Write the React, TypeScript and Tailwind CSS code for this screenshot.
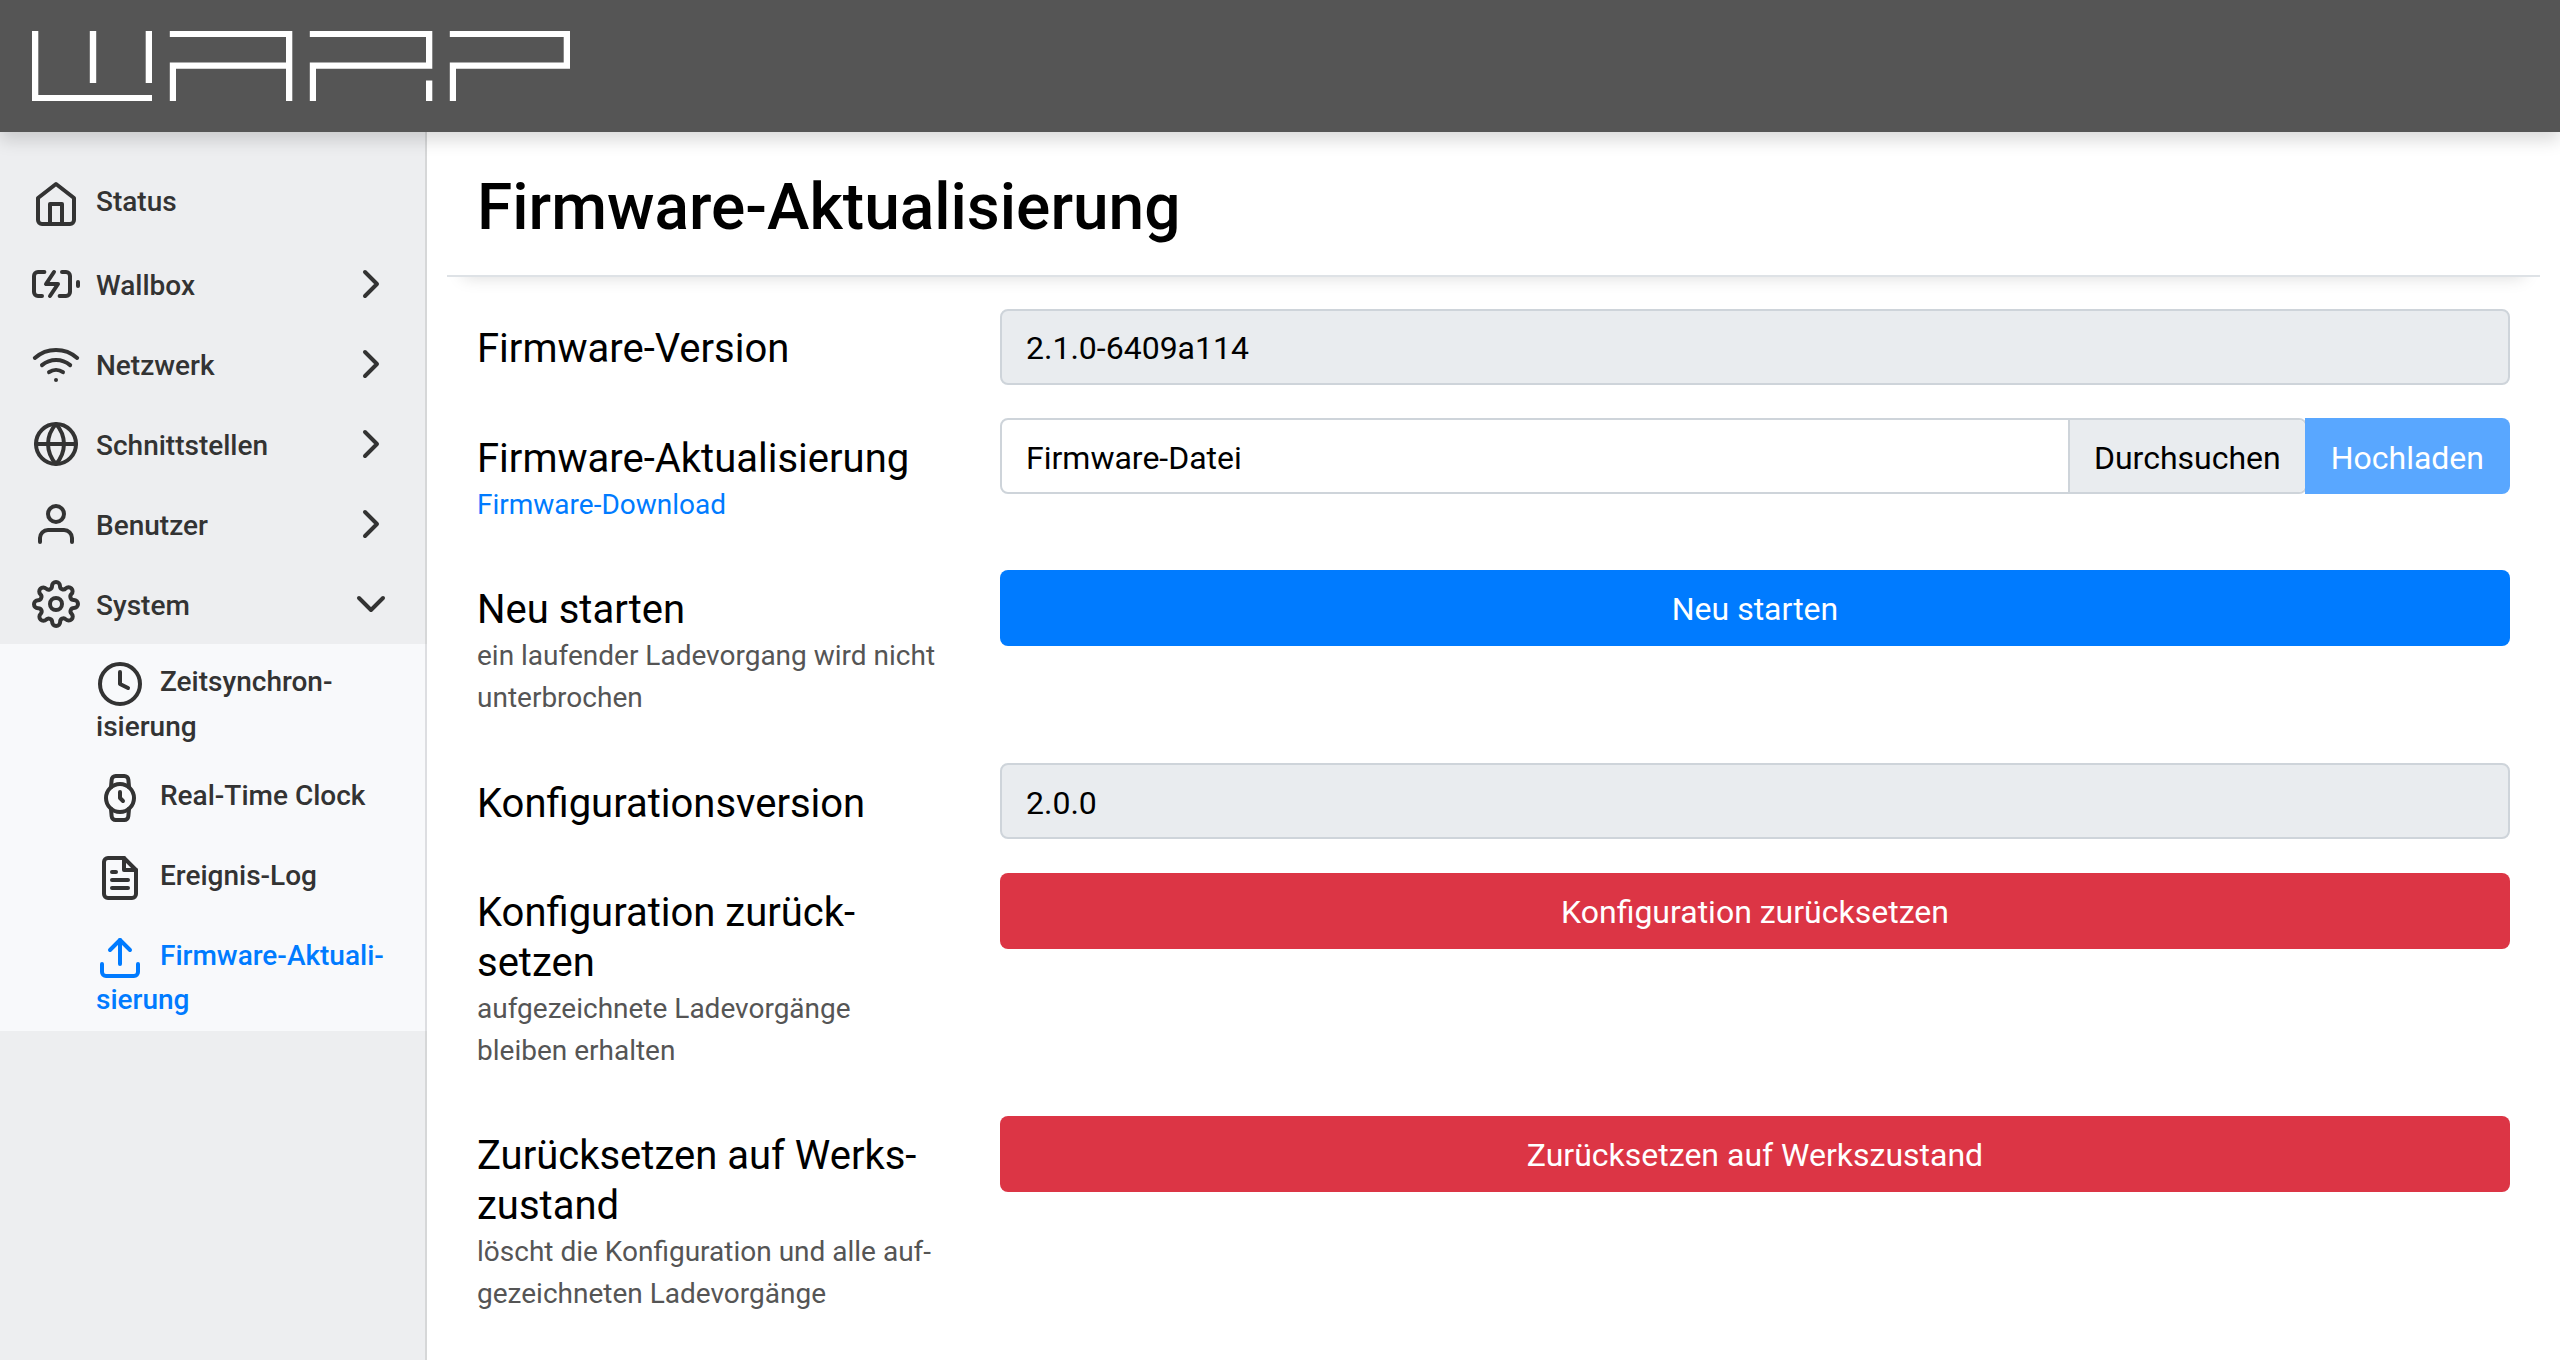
import React from "react";

const Icon = ({ children, className = "" }: { children: React.ReactNode; className?: string }) => (
  <svg
    viewBox="0 0 24 24"
    fill="none"
    stroke="currentColor"
    strokeWidth="2"
    strokeLinecap="round"
    strokeLinejoin="round"
    className={"size-12 shrink-0 " + className}
  >
    {children}
  </svg>
);

const Home = () => (
  <Icon>
    <path d="M3 9l9-7 9 7v11a2 2 0 0 1-2 2H5a2 2 0 0 1-2-2z" />
    <polyline points="9 22 9 12 15 12 15 22" />
  </Icon>
);
const Battery = () => (
  <Icon>
    <path d="M5 18H3a2 2 0 0 1-2-2V8a2 2 0 0 1 2-2h3.19M15 6h2a2 2 0 0 1 2 2v8a2 2 0 0 1-2 2h-3.19" />
    <line x1="23" y1="13" x2="23" y2="11" />
    <polyline points="11 6 7 12 13 12 9 18" />
  </Icon>
);
const Wifi = () => (
  <Icon>
    <path d="M5 12.55a11 11 0 0 1 14.08 0" />
    <path d="M1.42 9a16 16 0 0 1 21.16 0" />
    <path d="M8.53 16.11a6 6 0 0 1 6.95 0" />
    <line x1="12" y1="20" x2="12.01" y2="20" />
  </Icon>
);
const Globe = () => (
  <Icon>
    <circle cx="12" cy="12" r="10" />
    <line x1="2" y1="12" x2="22" y2="12" />
    <path d="M12 2a15.3 15.3 0 0 1 4 10 15.3 15.3 0 0 1-4 10 15.3 15.3 0 0 1-4-10 15.3 15.3 0 0 1 4-10z" />
  </Icon>
);
const User = () => (
  <Icon>
    <path d="M20 21v-2a4 4 0 0 0-4-4H8a4 4 0 0 0-4 4v2" />
    <circle cx="12" cy="7" r="4" />
  </Icon>
);
const Settings = () => (
  <Icon>
    <circle cx="12" cy="12" r="3" />
    <path d="M19.4 15a1.65 1.65 0 0 0 .33 1.82l.06.06a2 2 0 0 1 0 2.83 2 2 0 0 1-2.83 0l-.06-.06a1.65 1.65 0 0 0-1.82-.33 1.65 1.65 0 0 0-1 1.51V21a2 2 0 0 1-2 2 2 2 0 0 1-2-2v-.09A1.65 1.65 0 0 0 9 19.4a1.65 1.65 0 0 0-1.82.33l-.06.06a2 2 0 0 1-2.83 0 2 2 0 0 1 0-2.83l.06-.06a1.65 1.65 0 0 0 .33-1.82 1.65 1.65 0 0 0-1.51-1H3a2 2 0 0 1-2-2 2 2 0 0 1 2-2h.09A1.65 1.65 0 0 0 4.6 9a1.65 1.65 0 0 0-.33-1.82l-.06-.06a2 2 0 0 1 0-2.83 2 2 0 0 1 2.83 0l.06.06a1.65 1.65 0 0 0 1.82.33H9a1.65 1.65 0 0 0 1-1.51V3a2 2 0 0 1 2-2 2 2 0 0 1 2 2v.09a1.65 1.65 0 0 0 1 1.51 1.65 1.65 0 0 0 1.82-.33l.06-.06a2 2 0 0 1 2.83 0 2 2 0 0 1 0 2.83l-.06.06a1.65 1.65 0 0 0-.33 1.82V9a1.65 1.65 0 0 0 1.51 1H21a2 2 0 0 1 2 2 2 2 0 0 1-2 2h-.09a1.65 1.65 0 0 0-1.51 1z" />
  </Icon>
);
const Clock = () => (
  <Icon>
    <circle cx="12" cy="12" r="10" />
    <polyline points="12 6 12 12 16 14" />
  </Icon>
);
const Watch = () => (
  <Icon>
    <circle cx="12" cy="12" r="7" />
    <polyline points="12 9 12 12 13.5 13.5" />
    <path d="M16.51 17.35l-.35 3.83a2 2 0 0 1-2 1.82H9.83a2 2 0 0 1-2-1.82l-.35-3.83m.01-10.7l.35-3.83A2 2 0 0 1 9.83 1h4.35a2 2 0 0 1 2 1.82l.35 3.83" />
  </Icon>
);
const FileText = () => (
  <Icon>
    <path d="M14 2H6a2 2 0 0 0-2 2v16a2 2 0 0 0 2 2h12a2 2 0 0 0 2-2V8z" />
    <polyline points="14 2 14 8 20 8" />
    <line x1="16" y1="13" x2="8" y2="13" />
    <line x1="16" y1="17" x2="8" y2="17" />
    <polyline points="10 9 9 9 8 9" />
  </Icon>
);
const Upload = () => (
  <Icon>
    <path d="M21 15v4a2 2 0 0 1-2 2H5a2 2 0 0 1-2-2v-4" />
    <polyline points="17 8 12 3 7 8" />
    <line x1="12" y1="3" x2="12" y2="15" />
  </Icon>
);

const Logo = () => (
  <svg viewBox="0 0 538 70" className="h-[70px] w-[538px]" fill="#fff">
    <path d="M0 0h6.3v64H120v6H0z" />
    <path d="M57.8 0h6.4v52h-6.4zM113.7 0h6.3v52h-6.3z" />
    <path d="M137.8 0h122.5v70H254V37.8H144V70h-6.2V31.5H254V6H137.8z" />
    <path d="M277.8 0h122.5v37.8H284V70h-6.2V31.5H394V6H277.8zM394 49.5h6.3V70H394z" />
    <path d="M417.8 0H538v37.8H424V70h-6.2V31.5H531.7V6H417.8z" />
  </svg>
);

const groups = [
  { label: "Wallbox", icon: <Battery /> },
  { label: "Netzwerk", icon: <Wifi /> },
  { label: "Schnittstellen", icon: <Globe /> },
  { label: "Benutzer", icon: <User /> },
  { label: "System", icon: <Settings />, open: true },
];

const subItems = [
  { icon: <Clock />, first: "Zeitsynchron-", second: "isierung", secondClass: "h-[34px] leading-[37px]" },
  { icon: <Watch />, first: "Real-Time Clock" },
  { icon: <FileText />, first: "Ereignis-Log" },
  {
    icon: <Upload />,
    first: "Firmware-Aktuali-",
    second: "sierung",
    secondClass: "h-[33px] leading-[35px]",
    active: true,
  },
];

const Sidebar = () => (
  <nav className="w-[427px] shrink-0 border-r-2 border-[#d6d7d8] bg-[#edeef0] pt-8 text-[28px] leading-[42px] font-medium text-[#333333]">
    <a className="flex h-20 items-center gap-4 px-8">
      <Home />
      <span className="-mt-1">Status</span>
    </a>
    {groups.map((g) => (
      <a key={g.label} className="flex h-20 items-center gap-4 pr-[30px] pl-8">
        {g.icon}
        <span className="mt-1 flex-1">{g.label}</span>
        <Icon>
          <polyline points={g.open ? "6 9 12 15 18 9" : "9 18 15 12 9 6"} />
        </Icon>
      </a>
    ))}
    <div className="-mr-0.5 border-r-2 border-[#dddee1] bg-[#f8f9fb]">
      {subItems.map((s) => (
        <a key={s.first} className={"block py-4 pl-24 " + (s.active ? "text-[#007bff]" : "")}>
          <span className="flex items-center gap-4">
            {s.icon}
            <span className="-mt-1 whitespace-nowrap">{s.first}</span>
          </span>
          {s.second && <span className={"block " + s.secondClass}>{s.second}</span>}
        </a>
      ))}
    </div>
  </nav>
);

const Row = ({
  label,
  hint,
  className = "",
  labelClass = "pt-[15px]",
  children,
}: {
  label: React.ReactNode;
  hint?: React.ReactNode;
  className?: string;
  labelClass?: string;
  children: React.ReactNode;
}) => (
  <div className={"flex " + className}>
    <div className={"w-[523px] shrink-0 text-[40px] leading-[50px] whitespace-nowrap " + labelClass}>
      <div>{label}</div>
      {hint && <div className="text-[28px] leading-[42px] text-[#555555]">{hint}</div>}
    </div>
    <div className="flex h-[76px] flex-1">{children}</div>
  </div>
);

const ReadOnly = ({ children, className }: { children: React.ReactNode; className: string }) => (
  <div className={"flex flex-1 items-center rounded-lg border-2 border-[#ced4da] bg-[#e9ecef] px-6 " + className}>
    {children}
  </div>
);

export default function App() {
  return (
    <div className="flex h-[1360px] w-[2560px] flex-col overflow-hidden bg-white font-[Roboto,sans-serif] text-[32px] leading-[48px] text-black">
      <header className="relative z-10 flex h-[132px] shrink-0 items-start bg-[#555555] pt-[31px] pl-8 shadow-[0_8px_16px_rgba(0,0,0,0.15)]">
        <Logo />
      </header>
      <div className="flex min-h-0 flex-1">
        <Sidebar />
        <main className="flex-1 px-5">
          <div className="h-[145px] border-b-2 border-[#dee2e6] px-[30px] pt-[37px] shadow-[0_16px_16px_-16px_rgba(0,0,0,0.15)]">
            <h1 className="text-[64px] leading-[77px] font-medium">Firmware-Aktualisierung</h1>
          </div>
          <div className="px-[30px] pt-8">
            <Row label="Firmware-Version" className="h-[109px]">
              <ReadOnly className="pt-0.5">2.1.0-6409a114</ReadOnly>
            </Row>
            <Row
              label="Firmware-Aktualisierung"
              hint={<a className="text-[#007bff]">Firmware-Download</a>}
              className="h-[152px]"
              labelClass="pt-4"
            >
              <div className="flex flex-1 rounded-lg border-2 border-[#ced4da] bg-white">
                <span className="flex flex-1 items-center px-6 pt-1">Firmware-Datei</span>
                <span className="flex items-center rounded-r-md border-l-2 border-[#ced4da] bg-[#e9ecef] px-6 pt-1">
                  Durchsuchen
                </span>
              </div>
              <button className="-ml-0.5 rounded-r-lg bg-[#59a7ff] px-[26px] pt-1 text-white">Hochladen</button>
            </Row>
            <Row
              label="Neu starten"
              hint={
                <>
                  ein laufender Ladevorgang wird nicht
                  <br />
                  unterbrochen
                </>
              }
              className="h-[193px]"
            >
              <button className="flex-1 rounded-lg bg-[#007bff] pt-0.5 text-white">Neu starten</button>
            </Row>
            <Row label="Konfigurationsversion" className="h-[110px]" labelClass="pt-4">
              <ReadOnly className="pt-1">2.0.0</ReadOnly>
            </Row>
            <Row
              label={
                <>
                  Konfiguration zurück-
                  <br />
                  setzen
                </>
              }
              hint={
                <>
                  aufgezeichnete Ladevorgänge
                  <br />
                  bleiben erhalten
                </>
              }
              className="h-[243px]"
            >
              <button className="flex-1 rounded-lg bg-[#dc3545] pt-0.5 text-white">Konfiguration zurücksetzen</button>
            </Row>
            <Row
              label={
                <>
                  Zurücksetzen auf Werks-
                  <br />
                  zustand
                </>
              }
              hint={
                <>
                  löscht die Konfiguration und alle auf-
                  <br />
                  gezeichneten Ladevorgänge
                </>
              }
            >
              <button className="flex-1 rounded-lg bg-[#dc3545] pt-0.5 text-white">
                Zurücksetzen auf Werkszustand
              </button>
            </Row>
          </div>
        </main>
      </div>
    </div>
  );
}
